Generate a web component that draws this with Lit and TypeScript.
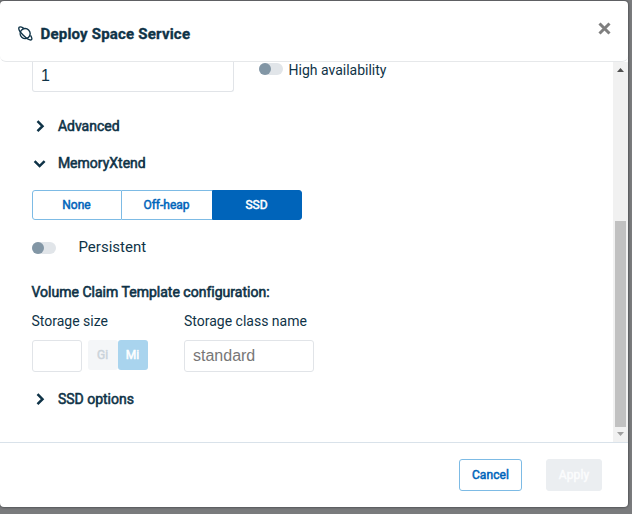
import { LitElement, html, css, svg } from "lit";
import { customElement, property } from "lit/decorators.js";

@customElement("toggle-switch")
class ToggleSwitch extends LitElement {
  static styles = css`
    :host { display: block; width: 24px; height: 12px; border-radius: 6px; background: #e1e5e9; flex: none; }
    .knob { width: 12px; height: 12px; border-radius: 50%; background: #8296a5; }
  `;
  render() { return html`<div class="knob"></div>`; }
}

@customElement("section-toggle")
class SectionToggle extends LitElement {
  @property() label = "";
  @property({ type: Boolean }) open = false;
  static styles = css`
    :host { display: flex; align-items: center; height: 20px; }
    svg { width: 16px; height: 16px; margin-right: 9.9px; fill: none; stroke: #0f3347; stroke-width: 2.5; }
    .label { font-size: 14px; -webkit-text-stroke: 0.55px #0f3347; white-space: nowrap; }
  `;
  render() {
    return html`<svg viewBox="0 0 16 16">${this.open
      ? svg`<path d="M2.6 6.2 7.6 11.1 12.6 6.2"/>`
      : svg`<path d="M5.5 3.2 10.5 8.2 5.5 13.2"/>`}</svg><span class="label">${this.label}</span>`;
  }
}

@customElement("app-root")
class AppRoot extends LitElement {
  static styles = css`
    :host { display: block; width: 632px; height: 514px; padding-top: 1px; background: #7a7b7d; box-sizing: border-box; overflow: hidden; font-family: Roboto, sans-serif; color: #0f3347; }
    * { box-sizing: border-box; }
    .dialog { display: flex; flex-direction: column; width: 628px; height: 506px; background: #fff; border-radius: 4px; box-shadow: 0 0 2px 1px #55575a; overflow: hidden; }
    header { display: flex; align-items: center; height: 61px; flex: none; padding: 6px 17px 0 18px; border-bottom: 1px solid #e6e8ea; border-radius: 0 0 6px 6px; }
    .planet { width: 15px; height: 15px; margin: -1px 7.5px 0 0; fill: none; stroke: #0f3347; stroke-width: 1.4; }
    h1 { flex: 1; margin: 0; font-size: 15px; line-height: 20px; font-weight: 700; letter-spacing: 0.2px; -webkit-text-stroke: 0.35px #0f3347; white-space: nowrap; }
    .close { width: 13px; height: 13px; margin-top: -11px; stroke: #7f7f7f; stroke-width: 3; fill: none; }
    main { display: flex; height: 380px; flex: none; }
    .content { flex: 1; padding-left: 32px; }
    .bar { display: flex; flex-direction: column; align-items: center; width: 15px; background: #f1f1f1; padding: 6px 0 5px; }
    .bar svg { width: 7px; height: 4px; flex: none; }
    .thumb { width: 11px; height: 206px; margin: 149px 0 5px; background: #c1c1c1; }
    .field { border: 1px solid #e1e4e8; border-radius: 3px; font: 16px "Liberation Sans", sans-serif; padding-left: 8px; background: #fff; }
    .top { display: flex; height: 30px; }
    .count { width: 202px; height: 30px; border-top: 0; border-radius: 0 0 3px 3px; line-height: 27px; }
    .top toggle-switch { margin: 1px 5.5px 0 25px; }
    .text { font-size: 14px; line-height: 17px; white-space: nowrap; }
    .advanced { margin-top: 24px; }
    .memory { margin-top: 17px; }
    .segments { display: flex; width: 270px; height: 30px; margin-top: 17px; }
    .segment { display: flex; align-items: center; justify-content: center; width: 90px; font-size: 12px; color: #0064ba; border: 1px solid #7dbbe5; -webkit-text-stroke: 0.5px currentColor; padding: 0 1px 1px 0; }
    .segment:first-child { border-radius: 3px 0 0 3px; }
    .segment:nth-child(2) { border-left: 0; border-right: 0; }
    .segment.active { background: #0064ba; color: #fff; border-color: #0064ba; border-radius: 0 3px 3px 0; }
    .persistent { display: flex; align-items: center; height: 20px; margin-top: 18px; }
    .persistent .text { margin-left: 22.5px; font-size: 15px; letter-spacing: 0; margin-top: -2px; }
    .claim { margin: 25px 0 0 -0.5px; font-size: 14px; line-height: 18px; -webkit-text-stroke: 0.6px #0f3347; letter-spacing: 0.01px; }
    .storage { display: flex; margin-top: 12px; }
    .size .text { margin-left: -0.5px; }
    .size { width: 152px; }
    .row { display: flex; margin-top: 10px; }
    .amount { width: 50px; height: 32px; margin-right: 6px; }
    .unit { display: flex; align-items: center; justify-content: center; width: 30px; height: 30px; font-size: 12px; color: #cbd3da; background: #f4f6f8; border-radius: 3px; -webkit-text-stroke: 0.5px currentColor; padding: 0 1px 1px 0; }
    .unit.on { background: #a9d4ee; color: #fff; }
    .class { width: 130px; height: 32px; line-height: 30px; color: #777; }
    .options { margin-top: 17px; }
    footer { display: flex; justify-content: flex-end; align-items: center; gap: 24px; flex: 1; padding: 0 26px 0 0; border-top: 1px solid #d9e2ea; }
    .button { display: flex; align-items: center; justify-content: center; width: 63px; height: 32px; border: 1px solid #7dbbe5; border-radius: 3px; color: #0064ba; font-size: 12px; letter-spacing: 0.1px; -webkit-text-stroke: 0.5px currentColor; }
    .button.disabled { width: 56px; background: #ebeef1; border-color: #ebeef1; color: #fbfcfd; }
  `;
  render() {
    return html`<div class="dialog">
      <header>
        <svg class="planet" viewBox="0 0 15 15"><path d="M3.3 4.4A5 5 0 1 1 10.6 11.2A5 5 0 0 1 3.3 4.4"/><path d="M5.6 2.2C3.6 1 1.8.6 1.2 1.2 0 2.8 2.6 6.6 5.3 9.2s6.3 5.7 8.2 4.5c1-.8.1-2.5-1-4.3"/></svg>
        <h1>Deploy Space Service</h1>
        <svg class="close" viewBox="0 0 13 13"><path d="M1.5 1.5 11.5 11.5M11.5 1.5 1.5 11.5"/></svg>
      </header>
      <main>
        <div class="content">
          <div class="top"><div class="field count">1</div><toggle-switch></toggle-switch><span class="text">High availability</span></div>
          <section-toggle class="advanced" label="Advanced"></section-toggle>
          <section-toggle class="memory" label="MemoryXtend" open></section-toggle>
          <div class="segments"><div class="segment">None</div><div class="segment">Off-heap</div><div class="segment active">SSD</div></div>
          <div class="persistent"><toggle-switch></toggle-switch><span class="text">Persistent</span></div>
          <div class="claim">Volume Claim Template configuration:</div>
          <div class="storage">
            <div class="size"><div class="text">Storage size</div><div class="row"><div class="field amount"></div><div class="unit">Gi</div><div class="unit on">Mi</div></div></div>
            <div><div class="text">Storage class name</div><div class="row"><div class="field class">standard</div></div></div>
          </div>
          <section-toggle class="options" label="SSD options"></section-toggle>
        </div>
        <div class="bar"><svg viewBox="0 0 7 4"><path fill="#505050" d="M0 4 3.5 0 7 4z"/></svg><div class="thumb"></div><svg viewBox="0 0 7 4"><path fill="#a0a0a0" d="M0 0 3.5 4 7 0z"/></svg></div>
      </main>
      <footer><div class="button">Cancel</div><div class="button disabled">Apply</div></footer>
    </div>`;
  }
}
